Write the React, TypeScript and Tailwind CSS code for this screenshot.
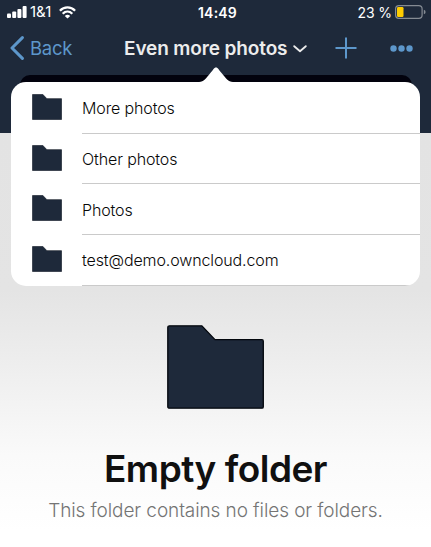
import type { ReactNode } from "react";

const folders = ["More photos", "Other photos", "Photos", "test@demo.owncloud.com"];

function Folder({ className, stroke }: { className: string; stroke: number }) {
  return (
    <svg viewBox="0 0 96 83" preserveAspectRatio="none" className={className} aria-hidden="true">
      <path
        d="M2.5 .8H34.5L47.5 14.5H94Q95.3 14.5 95.3 16V80.7Q95.3 82.2 94 82.2H2.5Q.8 82.2 .8 80.7V2.5Q.8 .8 2.5 .8Z"
        fill="#1e293a"
        stroke="#03070d"
        strokeWidth={stroke}
      />
    </svg>
  );
}

function Signal() {
  return (
    <svg viewBox="0 0 20 12" className="h-3 w-5 fill-white" aria-hidden="true">
      <rect x="0" y="7.5" width="4" height="4.5" rx="1" />
      <rect x="5.2" y="5.5" width="4" height="6.5" rx="1" />
      <rect x="10.4" y="3" width="4" height="9" rx="1" />
      <rect x="15.6" y="0" width="4" height="12" rx="1" />
    </svg>
  );
}

function Wifi() {
  return (
    <svg viewBox="0 0 17 13" className="h-[13px] w-[17px] fill-none stroke-white" strokeWidth="2.3" aria-hidden="true">
      <path d="M.9 4.8C5.2.3 11.8.3 16.1 4.8" />
      <path d="M3.7 7.8C6.5 5 10.5 5 13.3 7.8" />
      <path d="M5.8 9.9Q8.5 7.7 11.2 9.9L8.5 12.6Z" fill="white" stroke="none" />
    </svg>
  );
}

function Battery() {
  return (
    <svg viewBox="0 0 31 14" className="h-[14px] w-[31px]" aria-hidden="true">
      <rect x=".6" y=".6" width="26.5" height="12.8" rx="3.3" fill="none" stroke="#858b93" strokeWidth="1.2" />
      <rect x="2" y="2" width="6.5" height="10" rx="1.2" fill="#ffcc00" />
      <path d="M28.8 4.8Q30.6 5.3 30.6 7T28.8 9.2Z" fill="#858b93" />
    </svg>
  );
}

function StatusBar({ children }: { children: ReactNode }) {
  return (
    <div className="grid h-6 grid-cols-3 items-center pr-[5px] pl-[7px] text-[14px] text-white">{children}</div>
  );
}

export default function App() {
  return (
    <main className="relative flex h-[547px] w-[431px] flex-col overflow-hidden bg-white font-['Inter',sans-serif]">
      <header className="h-[133px] shrink-0 bg-[#1e293a]">
        <StatusBar>
          <div className="flex items-center gap-[3px]">
            <Signal />
            <span className="w-[23px] text-[15px] tracking-[-0.2px] whitespace-nowrap">1&amp;1</span>
            <span className="ml-[3px]"><Wifi /></span>
          </div>
          <span className="pl-[2px] text-center text-[14px] font-semibold tracking-[0.2px]">14:49</span>
          <div className="flex items-center justify-end gap-[3px]">
            <span className="tracking-[-0.1px] whitespace-nowrap">23 %</span>
            <Battery />
          </div>
        </StatusBar>
        <nav className="flex h-[48px] items-center pr-[18px] pl-[10px] text-[#5d97cb]">
          <button className="flex w-[114px] items-center gap-[6px] text-left">
            <svg viewBox="0 0 14 24" className="h-6 w-[14px] fill-none stroke-current" strokeWidth="3" strokeLinecap="round" strokeLinejoin="round" aria-hidden="true">
              <path d="M12.4 1.6 2 12 12.4 22.4" />
            </svg>
            <span className="pt-px text-[18.5px] tracking-[-0.3px]">Back</span>
          </button>
          <button className="flex w-[183px] items-center gap-[5px] text-[#ececec]">
            <span className="w-[164px] pt-[2px] text-left text-[19px] font-semibold tracking-[-0.12px] whitespace-nowrap">Even more photos</span>
            <svg viewBox="0 0 14 8" className="mt-px h-2 w-[14px] shrink-0 fill-none stroke-current" strokeWidth="1.8" strokeLinecap="round" strokeLinejoin="round" aria-hidden="true">
              <path d="M1.2 1.2 7 6.3 12.8 1.2" />
            </svg>
          </button>
          <svg viewBox="0 0 22 22" className="ml-[28px] h-[22px] w-[22px] stroke-current" strokeWidth="2" aria-hidden="true">
            <path d="M11 .5V21.5M.5 11H21.5" />
          </svg>
          <svg viewBox="0 0 23 7" className="ml-auto h-[7px] w-[23px] fill-current" aria-hidden="true">
            <circle cx="3.5" cy="3.5" r="3.2" /><circle cx="11.5" cy="3.5" r="3.2" /><circle cx="19.5" cy="3.5" r="3.2" />
          </svg>
        </nav>
      </header>

      <section className="flex flex-1 flex-col items-center bg-[linear-gradient(#e3e3e3_0%,#e4e4e4_38%,#f0f0f0_60%,#fafafa_78%,#ffffff_96%)] pt-[192px]">
        <Folder className="h-[84px] w-[97px]" stroke={1.3} />
        <h1 className="mt-[38px] text-[37px] leading-[44px] font-semibold tracking-[-0.5px] text-[#101010]">Empty folder</h1>
        <p className="mt-[8px] text-[19px] leading-6 font-[350] tracking-[-0.09px] whitespace-nowrap text-[#747474]">This folder contains no files or folders.</p>
      </section>

      <div className="absolute top-[75px] left-5 h-5 w-[392px] rounded-t-[10px] bg-[#02020d]" />
      <div className="absolute top-[82px] left-[11px] w-[409px]">
        <svg viewBox="0 0 34 16" className="absolute -top-[15px] left-[188px] h-4 w-[34px] fill-white" aria-hidden="true">
          <path d="M0 16V15C5 15 7 11 11 6.5C14 3.2 15 .5 17 .5S20 3.2 23 6.5C27 11 29 15 34 15V16Z" />
        </svg>
        <ul className="grid h-[204px] auto-rows-[50.7px] overflow-hidden rounded-[15px] bg-white pt-px">
          {folders.map((name) => (
            <li key={name} className="flex items-center pl-[21px]">
              <Folder className="mb-[3px] h-[26px] w-[30px]" stroke={1} />
              <span className="ml-[20px] flex h-full flex-1 items-center border-b border-[#cacaca] pt-px text-[16px] font-[350] tracking-[-0.12px] text-[#080808]">{name}</span>
            </li>
          ))}
        </ul>
      </div>
    </main>
  );
}
